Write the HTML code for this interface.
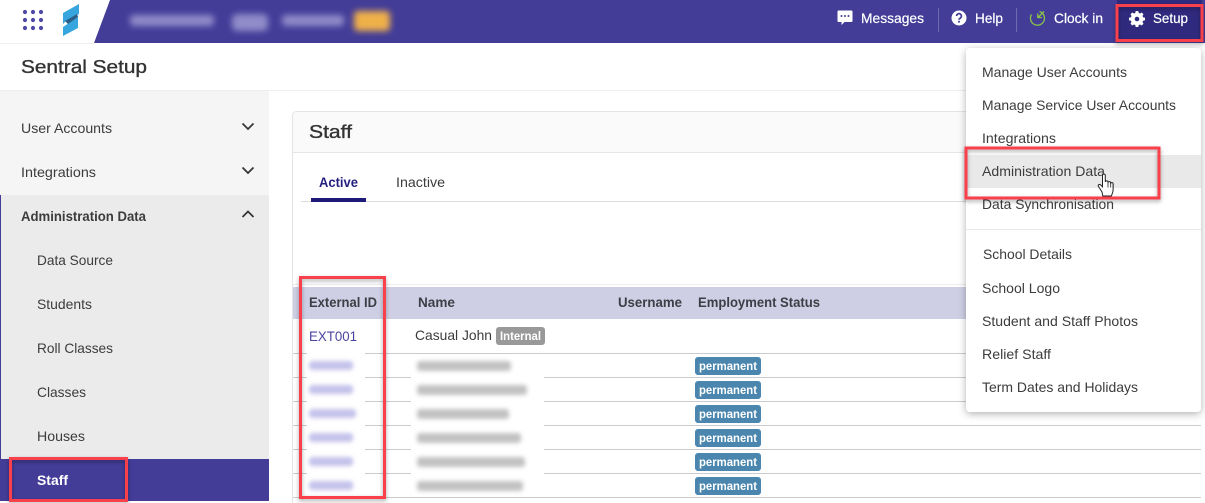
<!DOCTYPE html>
<html lang="en">
<head>
<meta charset="utf-8">
<title>Sentral Setup</title>
<style>
html,body{margin:0;padding:0;width:1205px;height:503px;overflow:hidden;background:#fff}
svg{display:block;position:absolute;left:0;top:0}
text{font-family:"Liberation Sans",Arial,sans-serif;font-size:14px;fill:#3c3c3c}
.b{font-weight:bold}
.nav{fill:#fff;stroke:#fff;stroke-width:.2}
.h{font-size:18.5px;fill:#333;stroke:#333;stroke-width:.35}
.th{font-weight:bold;fill:#3e3e46}
.p{font-weight:bold;font-size:12px;fill:#fff}
</style>
</head>
<body>
<svg width="1205" height="503" viewBox="0 0 1205 503" xmlns="http://www.w3.org/2000/svg">
<defs>
<filter id="b4" filterUnits="userSpaceOnUse" x="100" y="0" width="320" height="43"><feGaussianBlur stdDeviation="3.200"/></filter>
<filter id="b2" filterUnits="userSpaceOnUse" x="295" y="345" width="260" height="155"><feGaussianBlur stdDeviation="2.200"/></filter>
<filter id="sh" x="-20%" y="-20%" width="140%" height="140%"><feDropShadow dx="0" dy="2" stdDeviation="4" flood-color="#000" flood-opacity=".3"/></filter>
<filter id="rs" x="-10%" y="-10%" width="120%" height="120%"><feDropShadow dx="0" dy="2" stdDeviation="2" flood-color="#000" flood-opacity=".35"/></filter>
</defs>

<!-- top bar -->
<rect x="0" y="0" width="1205" height="43" fill="#433d98"/>
<polygon points="0,0 110,0 94,43 0,43" fill="#fff"/>
<rect x="0" y="43" width="94" height="1" fill="#efefef"/>
<g fill="#4f49a5">
<circle cx="25" cy="12" r="2.100"/><circle cx="33" cy="12" r="2.100"/><circle cx="41" cy="12" r="2.100"/>
<circle cx="25" cy="20" r="2.100"/><circle cx="33" cy="20" r="2.100"/><circle cx="41" cy="20" r="2.100"/>
<circle cx="25" cy="28" r="2.100"/><circle cx="33" cy="28" r="2.100"/><circle cx="41" cy="28" r="2.100"/>
</g>
<polygon points="63,13 79,4 79,14 65,22 63,24" fill="#38a6de"/>
<polygon points="63,27 78,17 78,28 63,36" fill="#38a6de"/>
<polygon points="65,21 77,14 78,17 68,24" fill="#2a5f88"/>
<g filter="url(#b4)">
<rect x="130" y="15" width="84" height="11" rx="4" fill="#8f8cc9"/>
<rect x="232" y="14" width="36" height="17" rx="5" fill="#8f8cc9"/>
<rect x="282" y="15" width="62" height="11" rx="4" fill="#8f8cc9"/>
<rect x="354" y="11" width="36" height="20" rx="4" fill="#f0b048"/>
</g>

<!-- page heading -->
<text class="h" x="21" y="73" textLength="126" lengthAdjust="spacingAndGlyphs">Sentral Setup</text>
<rect x="0" y="90" width="1205" height="1" fill="#eeeeee"/>

<!-- sidebar -->
<rect x="0" y="91" width="269" height="104" fill="#f5f5f5"/>
<rect x="0" y="195" width="269" height="264" fill="#ebebeb"/>
<rect x="0" y="195" width="1" height="264" fill="#433d98"/>
<rect x="0" y="459" width="269" height="42" fill="#433d98"/>
<text x="21" y="133" textLength="91" lengthAdjust="spacingAndGlyphs">User Accounts</text>
<text x="21" y="177" textLength="75" lengthAdjust="spacingAndGlyphs">Integrations</text>
<text class="b" x="21" y="221" textLength="125" lengthAdjust="spacingAndGlyphs">Administration Data</text>
<text x="37" y="265" textLength="76" lengthAdjust="spacingAndGlyphs">Data Source</text>
<text x="37" y="309" textLength="55" lengthAdjust="spacingAndGlyphs">Students</text>
<text x="37" y="353" textLength="76" lengthAdjust="spacingAndGlyphs">Roll Classes</text>
<text x="37" y="397" textLength="49" lengthAdjust="spacingAndGlyphs">Classes</text>
<text x="37" y="441" textLength="48" lengthAdjust="spacingAndGlyphs">Houses</text>
<text class="b" x="37" y="485" textLength="31" lengthAdjust="spacingAndGlyphs" style="fill:#fff">Staff</text>
<g fill="none" stroke="#333" stroke-width="1.700">
<path d="M242.500 123.500l5.500 5.500 5.500-5.500"/>
<path d="M242.500 167.500l5.500 5.500 5.500-5.500"/>
<path d="M242.500 217l5.500-5.500 5.500 5.500"/>
</g>

<!-- card -->
<rect x="292.500" y="111.500" width="912" height="400" rx="4" fill="#fff" stroke="#e4e4e4"/>
<path d="M293 152V116a4 4 0 0 1 4-4H1205V152Z" fill="#fafafa"/>
<rect x="293" y="152" width="912" height="1" fill="#e6e6e6"/>
<text class="h" x="309" y="138" textLength="43" lengthAdjust="spacingAndGlyphs">Staff</text>
<rect x="301" y="201" width="904" height="1" fill="#dcdcdc"/>
<rect x="311" y="198" width="55" height="4" fill="#1d1a78"/>
<text class="b" x="319" y="187" textLength="39" lengthAdjust="spacingAndGlyphs" style="fill:#231f7f">Active</text>
<text x="396" y="187" textLength="49" lengthAdjust="spacingAndGlyphs">Inactive</text>

<!-- table -->
<rect x="293" y="284" width="908" height="1" fill="#ececec"/>
<rect x="293" y="287" width="908" height="32" fill="#cecfe4"/>
<text class="th" x="309" y="307" textLength="68" lengthAdjust="spacingAndGlyphs">External ID</text>
<text class="th" x="418" y="307" textLength="37" lengthAdjust="spacingAndGlyphs">Name</text>
<text class="th" x="618" y="307" textLength="64" lengthAdjust="spacingAndGlyphs">Username</text>
<text class="th" x="698" y="307" textLength="122" lengthAdjust="spacingAndGlyphs">Employment Status</text>
<text x="309" y="341" textLength="48" lengthAdjust="spacingAndGlyphs" style="fill:#4b45a0">EXT001</text>
<text x="415" y="340" textLength="77" lengthAdjust="spacingAndGlyphs">Casual John</text>
<rect x="496" y="327" width="49" height="18" rx="3" fill="#999"/>
<text class="p" x="500" y="340" textLength="41" lengthAdjust="spacingAndGlyphs">Internal</text>
<g fill="#cbcbcb">
<rect x="293" y="353" width="908" height="1"/><rect x="293" y="377" width="908" height="1"/>
<rect x="293" y="401" width="908" height="1"/><rect x="293" y="425" width="908" height="1"/>
<rect x="293" y="449" width="908" height="1"/><rect x="293" y="473" width="908" height="1"/>
<rect x="293" y="497" width="908" height="1"/>
</g>
<g fill="#fff">
<rect x="307" y="345" width="58" height="152"/>
<rect x="411" y="354" width="133" height="143"/>
</g>
<g fill="#c4c2ea" filter="url(#b2)">
<rect x="309" y="361" width="44" height="9" rx="3"/>
<rect x="309" y="385" width="44" height="9" rx="3"/>
<rect x="309" y="409" width="47" height="9" rx="3"/>
<rect x="309" y="433" width="44" height="9" rx="3"/>
<rect x="309" y="457" width="44" height="9" rx="3"/>
<rect x="309" y="481" width="44" height="9" rx="3"/>
</g>
<g fill="#c2c2c2" filter="url(#b2)">
<rect x="417" y="361" width="94" height="10" rx="3"/>
<rect x="417" y="385" width="110" height="10" rx="3"/>
<rect x="417" y="409" width="92" height="10" rx="3"/>
<rect x="417" y="433" width="104" height="10" rx="3"/>
<rect x="417" y="457" width="108" height="10" rx="3"/>
<rect x="417" y="481" width="106" height="10" rx="3"/>
</g>
<g fill="#4a86ad">
<rect x="695" y="357" width="66" height="18" rx="3"/><rect x="695" y="381" width="66" height="18" rx="3"/>
<rect x="695" y="405" width="66" height="18" rx="3"/><rect x="695" y="429" width="66" height="18" rx="3"/>
<rect x="695" y="453" width="66" height="18" rx="3"/><rect x="695" y="477" width="66" height="18" rx="3"/>
</g>
<text class="p" x="699" y="370" textLength="58" lengthAdjust="spacingAndGlyphs">permanent</text>
<text class="p" x="699" y="394" textLength="58" lengthAdjust="spacingAndGlyphs">permanent</text>
<text class="p" x="699" y="418" textLength="58" lengthAdjust="spacingAndGlyphs">permanent</text>
<text class="p" x="699" y="442" textLength="58" lengthAdjust="spacingAndGlyphs">permanent</text>
<text class="p" x="699" y="466" textLength="58" lengthAdjust="spacingAndGlyphs">permanent</text>
<text class="p" x="699" y="490" textLength="58" lengthAdjust="spacingAndGlyphs">permanent</text>

<rect x="1201" y="44" width="4" height="459" fill="#fff"/>

<!-- dropdown -->
<rect x="966" y="48" width="235" height="364" rx="4" fill="#fff" filter="url(#sh)"/>
<rect x="966" y="155" width="235" height="33" fill="#e9e9e9"/>
<rect x="966" y="229" width="235" height="1" fill="#e8e8e8"/>
<text x="982" y="77" textLength="145" lengthAdjust="spacingAndGlyphs">Manage User Accounts</text>
<text x="982" y="110" textLength="194" lengthAdjust="spacingAndGlyphs">Manage Service User Accounts</text>
<text x="982" y="143" textLength="74" lengthAdjust="spacingAndGlyphs">Integrations</text>
<text x="982" y="176" textLength="123" lengthAdjust="spacingAndGlyphs">Administration Data</text>
<text x="982" y="209" textLength="132" lengthAdjust="spacingAndGlyphs">Data Synchronisation</text>
<text x="983" y="259" textLength="89" lengthAdjust="spacingAndGlyphs">School Details</text>
<text x="982" y="293" textLength="78" lengthAdjust="spacingAndGlyphs">School Logo</text>
<text x="982" y="326" textLength="156" lengthAdjust="spacingAndGlyphs">Student and Staff Photos</text>
<text x="982" y="359" textLength="69" lengthAdjust="spacingAndGlyphs">Relief Staff</text>
<text x="982" y="392" textLength="156" lengthAdjust="spacingAndGlyphs">Term Dates and Holidays</text>

<!-- nav right -->
<rect x="1117" y="0" width="85" height="40" fill="#2f2a7e"/>
<rect x="938" y="8" width="1" height="24" fill="#6f6bb0"/>
<rect x="1016" y="8" width="1" height="24" fill="#6f6bb0"/>
<path d="M838.500 10.500h13a1 1 0 0 1 1 1V21a1 1 0 0 1-1 1h-7L841.500 25v-3h-3a1 1 0 0 1-1-1V11.500a1 1 0 0 1 1-1Z" fill="#fff"/>
<g fill="#433d98"><circle cx="841.500" cy="16" r="1"/><circle cx="845" cy="16" r="1"/><circle cx="848.500" cy="16" r="1"/></g>
<text class="nav" x="861" y="23" textLength="63" lengthAdjust="spacingAndGlyphs">Messages</text>
<circle cx="959" cy="18" r="7.500" fill="#fff"/>
<path d="M956.600 16a2.400 2.400 0 1 1 3.700 2.100c-.9.500-1.300 1-1.300 1.700" fill="none" stroke="#433d98" stroke-width="1.700"/>
<rect x="958.100" y="20.800" width="1.800" height="1.800" fill="#433d98"/>
<text class="nav" x="975" y="23" textLength="28" lengthAdjust="spacingAndGlyphs">Help</text>
<path d="M1039.500 11.500A7 7 0 1 1 1031.500 14.500" fill="none" stroke="#8bc34a" stroke-width="1.300"/>
<path d="M1044 11.500l-6 6M1037.800 13.500v4h4" fill="none" stroke="#8bc34a" stroke-width="1.300"/>
<text class="nav" x="1054" y="23" textLength="49" lengthAdjust="spacingAndGlyphs">Clock in</text>
<path d="M1135.700 11h2.600l.4 1.900 1.300.6 1.700-1 1.800 1.800-1 1.700.6 1.300 1.900.4v2.600l-1.900.4-.6 1.300 1 1.700-1.800 1.800-1.700-1-1.300.6-.4 1.900h-2.600l-.4-1.900-1.300-.6-1.700 1-1.800-1.800 1-1.700-.6-1.300-1.900-.4v-2.600l1.900-.4.600-1.300-1-1.700 1.800-1.800 1.700 1 1.300-.6Z" fill="#fff"/>
<circle cx="1137" cy="19" r="2.300" fill="#2f2a7e"/>
<text class="nav" x="1153" y="23" textLength="35" lengthAdjust="spacingAndGlyphs">Setup</text>

<!-- red annotation boxes -->
<g fill="none" stroke="#f9414c" stroke-width="3" filter="url(#rs)">
<rect x="1117" y="5.500" width="85" height="35"/>
<rect x="966" y="148" width="193" height="50"/>
<rect x="300.500" y="277.500" width="84" height="220"/>
<rect x="10.500" y="458.500" width="116" height="42"/>
</g>

<!-- hand cursor -->
<path d="M1102 192l-3.500-5.500c-.9-1.500.9-2.800 2.100-1.600l1.900 1.900V175.500c0-2 2.800-2 2.800 0V182c0-1.500 2.700-1.500 2.700 0v.8c0-1.500 2.600-1.500 2.600 0v.9c0-1.400 2.500-1.400 2.500 0V190c0 2.500-1 4-1.800 6h-8.500Z" fill="#fff" stroke="#222" stroke-width="1"/>
<path d="M1108 182.500v5M1110.700 183v4.500M1113.200 184v3.500" stroke="#222" stroke-width=".8" fill="none"/>
</svg>
</body>
</html>
